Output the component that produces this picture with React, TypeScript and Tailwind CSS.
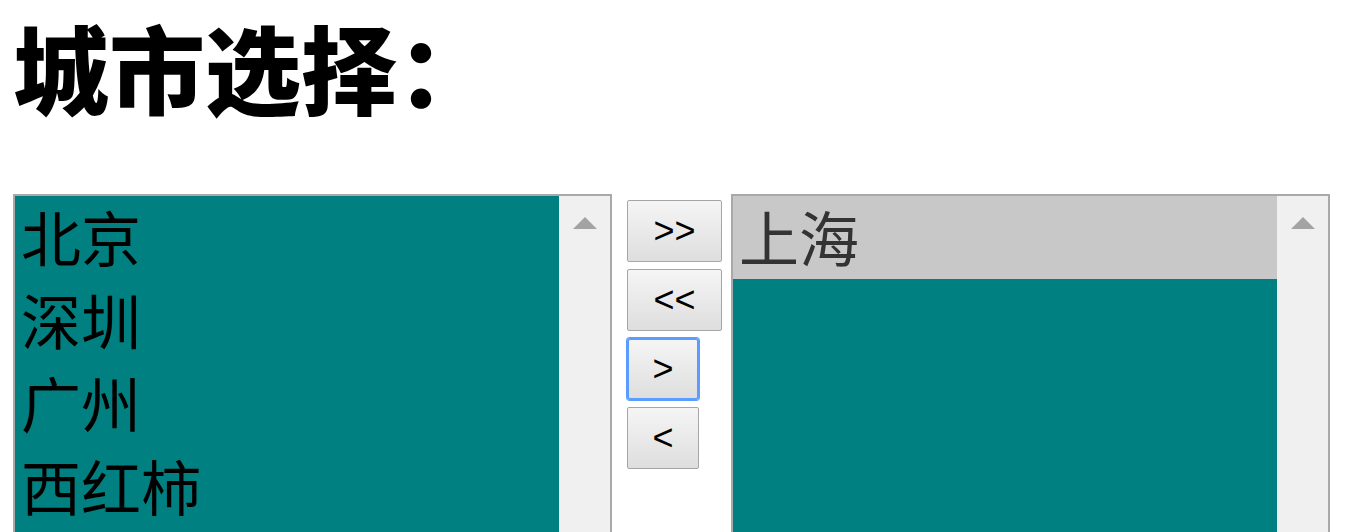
import React from "react";

const cjk = { fontFamily: '"Noto Sans CJK SC", "Noto Sans", sans-serif' };

function ScrollTrack() {
  return (
    <div className="w-[51px] shrink-0 bg-[#f0f0f0] flex justify-center pt-[21px]">
      <div className="w-0 h-0 border-l-[12.5px] border-r-[12.5px] border-b-[12px] border-l-transparent border-r-transparent border-b-[#a3a3a3]" />
    </div>
  );
}

function Btn({ label, wide, focused }: { label: string; wide?: boolean; focused?: boolean }) {
  return (
    <button
      className={
        "h-[62px] flex items-center justify-center bg-gradient-to-b from-[#f5f5f5] to-[#dedede] text-black text-[36px] leading-none " +
        (wide ? "w-[95px] " : "w-[72px] ") +
        (focused
          ? "border-2 border-[#5b9dff] rounded-[3px] shadow-[0_0_0_1px_#5b9dff]"
          : "border border-[#a6a6a6] rounded-[2px]")
      }
      style={{ fontFamily: '"Liberation Sans", Arial, sans-serif' }}
    >
      {label}
    </button>
  );
}

export default function App() {
  const left = ["北京", "深圳", "广州", "西红柿"];
  return (
    <div className="w-[1345px] h-[532px] overflow-hidden bg-white pl-[13px]" style={cjk}>
      <h1 className="text-[96px] leading-[131px] font-black text-black m-0">城市选择：</h1>
      <div className="flex items-start mt-[63px]">
        <div className="w-[599px] h-[420px] border-2 border-[#a9a9a9] flex shrink-0">
          <div className="flex-1 bg-[#008080]">
            {left.map((c) => (
              <div key={c} className="h-[83px] pl-[6px] pb-[3px] text-[60px] leading-[80px] text-black">
                {c}
              </div>
            ))}
          </div>
          <ScrollTrack />
        </div>
        <div className="ml-[15px] mt-[6px] w-[95px] flex flex-col items-start gap-[7px] shrink-0">
          <Btn label=">>" wide />
          <Btn label="<<" wide />
          <Btn label=">" focused />
          <Btn label="<" />
        </div>
        <div className="ml-[9px] w-[599px] h-[420px] border-2 border-[#a9a9a9] flex shrink-0">
          <div className="flex-1 bg-[#008080]">
            <div className="h-[83px] pl-[6px] pb-[3px] text-[60px] leading-[80px] text-[#333333] bg-[#c8c8c8]">
              上海
            </div>
          </div>
          <ScrollTrack />
        </div>
      </div>
    </div>
  );
}
